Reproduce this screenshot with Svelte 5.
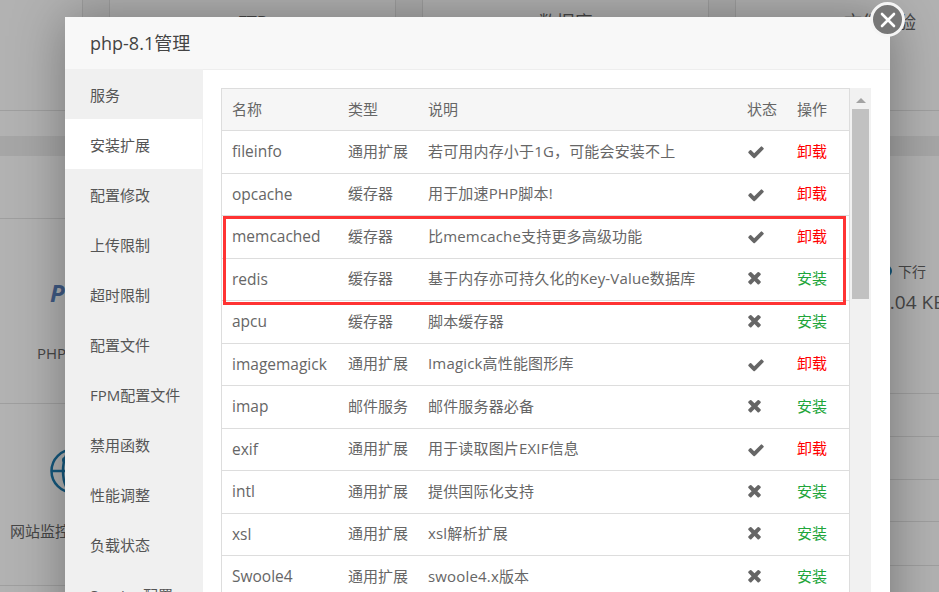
<script>
	const menu = ['服务', '安装扩展', '配置修改', '上传限制', '超时限制', '配置文件', 'FPM配置文件', '禁用函数', '性能调整', '负载状态', 'Session配置']
	const rows = [
		['fileinfo', '通用扩展', '若可用内存小于1G，可能会安装不上', true],
		['opcache', '缓存器', '用于加速PHP脚本!', true],
		['memcached', '缓存器', '比memcache支持更多高级功能', true],
		['redis', '缓存器', '基于内存亦可持久化的Key-Value数据库', false],
		['apcu', '缓存器', '脚本缓存器', false],
		['imagemagick', '通用扩展', 'Imagick高性能图形库', true],
		['imap', '邮件服务', '邮件服务器必备', false],
		['exif', '通用扩展', '用于读取图片EXIF信息', true],
		['intl', '通用扩展', '提供国际化支持', false],
		['xsl', '通用扩展', 'xsl解析扩展', false],
		['Swoole4', '通用扩展', 'swoole4.x版本', false]
	]
</script>

<div class="page">
	<div class="tabs">
		<div class="tab first"></div>
		<div class="tab">FTP</div>
		<div class="tab">数据库</div>
		<div class="tab last">文件检验</div>
	</div>
	<div class="cols">
		<div class="col">
			<div class="strip h108"></div>
			<div class="band"></div>
			<div class="strip h63"></div>
			<div class="strip soft">
				<span class="php-logo">P</span>
				<span class="soft-name">PHP</span>
			</div>
			<div class="strip soft2">
				<svg class="globe" viewBox="0 0 46 46" width="46" height="46">
					<circle cx="23" cy="23" r="21.5" fill="none" stroke="#1d7fb5" stroke-width="2.5"/>
					<ellipse cx="23" cy="23" rx="10" ry="21.5" fill="none" stroke="#1d7fb5" stroke-width="2.5"/>
					<path d="M2 23h42" stroke="#1d7fb5" stroke-width="2.5"/>
					<circle cx="15" cy="12" r="3" fill="#1d7fb5"/>
				</svg>
				<span class="soft-name monitor">网站监控</span>
			</div>
		</div>
		<div class="col right">
			<div class="strip h108"></div>
			<div class="band"></div>
			<div class="strip net">
				<span class="net-label"><i class="dot"></i>下行</span>
				<span class="net-value">3.04 KB</span>
			</div>
			<div class="strip h43"></div>
			<div class="strip h43"></div>
			<div class="strip h42"></div>
			<div class="strip h44"></div>
			<div class="strip h42"></div>
		</div>
	</div>

	<div class="shade"></div>

	<div class="modal">
		<div class="title">php-8.1管理</div>
		<div class="body">
			<div class="menu">
				{#each menu as item, i}
					<div class="menu-item {i === 1 ? 'active' : ''}">{item}</div>
				{/each}
			</div>
			<div class="content">
				<div class="table">
					<div class="tr head">
						<div>名称</div><div>类型</div><div>说明</div><div>状态</div><div>操作</div>
					</div>
					{#each rows as row}
						<div class="tr">
							<div class="name">{row[0]}</div>
							<div>{row[1]}</div>
							<div class="desc">{row[2]}</div>
							<div class="state">
								{#if row[3]}
									<svg class="icon-ok" viewBox="0 0 1792 1792" width="18" height="18"><path d="M1671 566q0 40-28 68l-724 724-136 136q-28 28-68 28t-68-28l-136-136-362-362q-28-28-28-68t28-68l136-136q28-28 68-28t68 28l294 295 656-657q28-28 68-28t68 28l136 136q28 28 28 68z"/></svg>
								{:else}
									<svg class="icon-no" viewBox="0 0 1408 1792" width="15" height="19"><path d="M1298 1322q0 40-28 68l-136 136q-28 28-68 28t-68-28l-294-294-294 294q-28 28-68 28t-68-28l-136-136q-28-28-28-68t28-68l294-294-294-294q-28-28-28-68t28-68l136-136q28-28 68-28t68 28l294 294 294-294q28-28 68-28t68 28l136 136q28 28 28 68t-28 68l-294 294 294 294q28 28 28 68z"/></svg>
								{/if}
							</div>
							<div class={row[3] ? 'remove' : 'install'}>{row[3] ? '卸载' : '安装'}</div>
						</div>
					{/each}
					<div class="mark"></div>
				</div>
				<div class="track">
					<div class="arrow"></div>
					<div class="thumb"></div>
				</div>
			</div>
		</div>
	</div>

	<div class="close">
		<svg viewBox="0 0 16 16" width="16" height="16"><path d="M2 2l12 12M14 2L2 14" stroke="#fff" stroke-width="2.6" stroke-linecap="round"/></svg>
	</div>
</div>

<style>
	:global(body) {
		font-family: "Open Sans", "Noto Sans CJK SC", sans-serif;
	}

	.page {
		position: relative;
		width: 939px;
		height: 592px;
		overflow: hidden;
		background: #fff;
		color: #666;
	}

	.tabs {
		display: grid;
		grid-template-columns: 83px 287px 287px 1fr;
		column-gap: 26px;
		height: 110px;
		border-bottom: 1px solid #e4e4e4;
		background: #f8f8f8;
	}

	.tab {
		background: #fff;
		border-left: 1px solid #e4e4e4;
		border-right: 1px solid #e4e4e4;
		text-align: center;
		font-size: 18px;
		line-height: 44px;
	}

	.tab.first {
		border-left: 0;
	}

	.tab.last {
		border-right: 0;
		text-align: left;
		padding-left: 108px;
	}

	.cols {
		display: flex;
		justify-content: space-between;
	}

	.col {
		width: 65px;
	}

	.col.right {
		width: 49px;
	}

	.strip {
		box-sizing: border-box;
		border-bottom: 1px solid #e4e4e4;
		position: relative;
	}

	.h108 {
		height: 25px;
		border-bottom: 0;
	}

	.band {
		height: 20px;
		background: #eee;
	}

	.h63 {
		height: 63px;
	}

	.h43 { height: 43px; }
	.h42 { height: 42px; }
	.h44 { height: 44px; }

	.soft {
		height: 185px;
		padding-top: 56px;
	}

	.soft2 {
		height: 182px;
		padding-top: 44px;
	}

	.php-logo {
		display: block;
		margin-left: 50px;
		font-size: 24px;
		font-weight: 700;
		font-style: italic;
		line-height: 36px;
		color: #5b82bd;
		white-space: nowrap;
	}

	.soft-name {
		display: block;
		margin: 32px 0 0 37px;
		font-size: 15px;
		line-height: 20px;
		white-space: nowrap;
	}

	.globe {
		display: block;
		margin-left: 50px;
	}

	.monitor {
		margin: 27px 0 0 10px;
	}

	.net {
		height: 238px;
		padding-top: 106px;
		white-space: nowrap;
	}

	.net-label {
		display: block;
		font-size: 14px;
		line-height: 20px;
		padding-left: 8px;
	}

	.dot {
		position: absolute;
		left: -10px;
		top: 109px;
		width: 12px;
		height: 12px;
		border-radius: 50%;
		background: #1d7fb5;
	}

	.net-value {
		display: block;
		font-size: 19px;
		line-height: 28px;
		margin: 6px 0 0 -11px;
	}

	.shade {
		position: absolute;
		inset: 0;
		background: rgba(0, 0, 0, 0.3);
	}

	.modal {
		position: absolute;
		left: 65px;
		top: 17px;
		width: 825px;
		height: 640px;
		background: #fff;
		box-shadow: 1px 1px 50px rgba(0, 0, 0, 0.35);
	}

	.title {
		box-sizing: border-box;
		height: 53px;
		padding-left: 25px;
		margin-bottom: -1px;
		background: #f8f8f8;
		border-bottom: 1px solid #eee;
		color: #444;
		font-size: 18px;
		line-height: 52px;
	}

	.body {
		display: flex;
	}

	.menu {
		box-sizing: border-box;
		width: 138px;
		height: 587px;
		padding-right: 1px;
		background: #f0f0f0;
	}

	.menu-item {
		height: 50px;
		padding-left: 25px;
		color: #555;
		font-size: 15px;
		line-height: 53px;
	}

	.menu-item.active {
		background: #fff;
	}

	.content {
		display: flex;
		align-items: flex-start;
		padding: 19px 0 0 18px;
	}

	.table {
		position: relative;
		box-sizing: border-box;
		width: 629px;
		border: 1px solid #ddd;
		border-bottom: 0;
	}

	.tr {
		box-sizing: border-box;
		display: grid;
		grid-template-columns: 116px 80px 319px 50px 1fr;
		align-items: center;
		height: 42.5px;
		padding: 0 0 3px 10px;
		border-bottom: 1px solid #ddd;
		font-size: 15px;
		color: #666;
	}

	.tr.head {
		height: 42px;
		background: #f6f6f6;
		padding-bottom: 3px;
	}

	.name {
		font-size: 15.5px;
		padding-top: 2px;
	}

	.desc {
		letter-spacing: 0.17px;
	}

	.state {
		display: flex;
		align-items: center;
	}

	.state svg {
		fill: #666;
	}

	.icon-ok {
		margin-top: 4px;
	}

	.remove {
		color: #f00;
	}

	.install {
		color: #20a53a;
	}

	.mark {
		position: absolute;
		left: 1px;
		top: 127px;
		width: 623px;
		height: 89px;
		box-sizing: border-box;
		border: 3.5px solid #f33;
	}

	.track {
		position: relative;
		width: 21px;
		height: 520px;
		padding-top: 21px;
		background: #f1f1f1;
	}

	.arrow {
		position: absolute;
		left: 6px;
		top: 10px;
		border-left: 5px solid transparent;
		border-right: 5px solid transparent;
		border-bottom: 5px solid #a3a3a3;
	}

	.thumb {
		width: 17px;
		height: 190px;
		margin-left: 2px;
		background: #c1c1c1;
	}

	.close {
		position: absolute;
		left: 870px;
		top: 2px;
		box-sizing: border-box;
		width: 35px;
		height: 35px;
		display: flex;
		align-items: center;
		justify-content: center;
		border: 3px solid #f5f5f5;
		border-radius: 50%;
		background: #777;
	}
</style>
